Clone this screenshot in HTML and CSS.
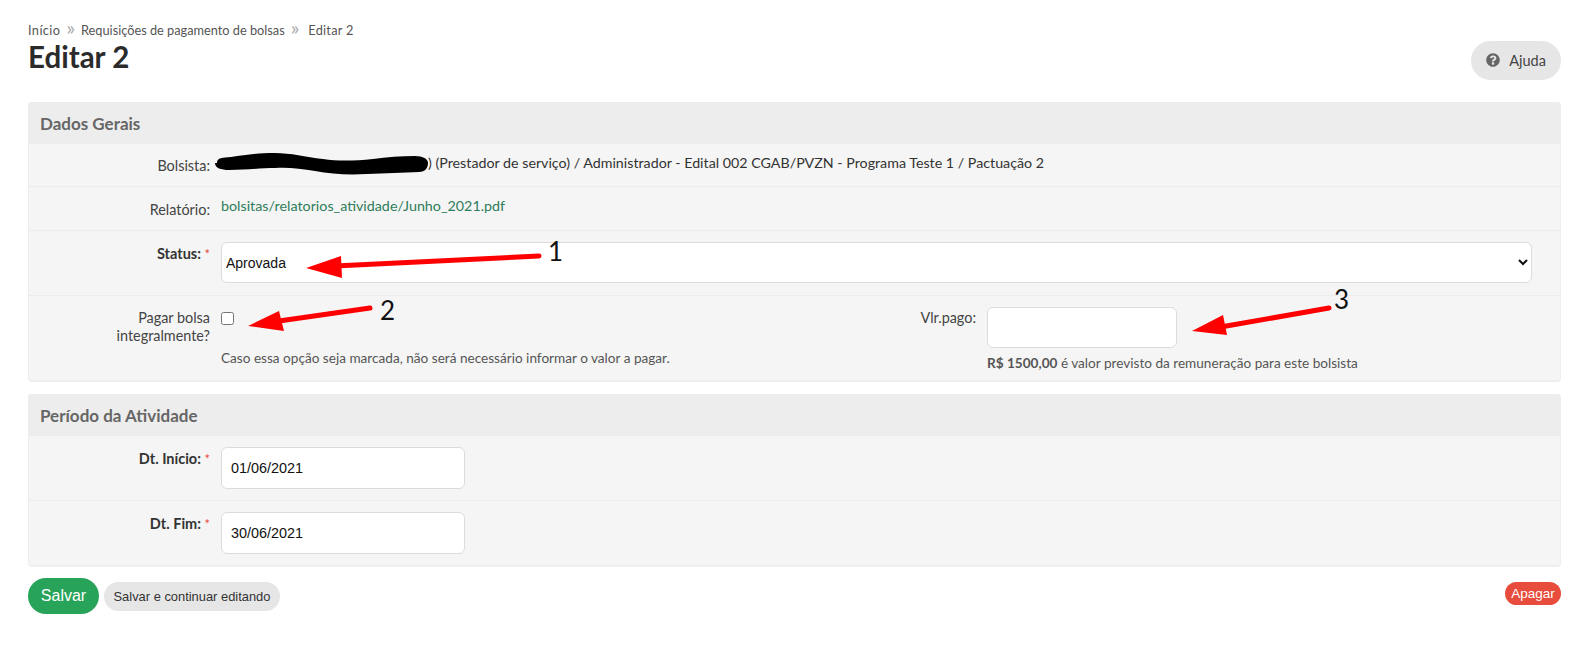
FILE: index.html
```html
<!DOCTYPE html>
<html lang="pt-BR">
<head>
<meta charset="utf-8">
<title>Editar 2</title>
<link rel="stylesheet" href="styles.css">
</head>
<body>
<main class="page">
  <div class="top">
    <div>
      <nav class="crumbs"><a>Início</a><span class="sep">»</span><a>Requisições de pagamento de bolsas</a><span class="sep">»</span><span>Editar 2</span></nav>
      <h1>Editar 2</h1>
    </div>
    <a class="help">
      <svg class="help-icon" viewBox="0 0 512 512"><path fill="#666" d="M504 256c0 137-111 248-248 248S8 393 8 256 119 8 256 8s248 111 248 248zM262.700 90c-54.500 0-89.300 23-116.500 63.800-3.500 5.300-2.300 12.400 2.700 16.300l34.700 26.300c5.200 3.900 12.600 3 16.700-2.100 17.900-22.700 30.100-35.800 57.300-35.800 20.400 0 45.700 13.100 45.700 33 0 15-12.400 22.700-32.600 34-23.600 13.200-54.800 29.700-54.800 70.900V296c0 6.600 5.400 12 12 12h56c6.600 0 12-5.400 12-12v-1.300c0-28.600 83.400-29.800 83.400-107.100 0-58.200-60.400-102.600-116.600-97.600zM256 338c-25.400 0-46 20.600-46 46s20.600 46 46 46 46-20.600 46-46-20.600-46-46-46z"/></svg>
      <span>Ajuda</span>
    </a>
  </div>

  <form>
    <section class="panel">
      <h2>Dados Gerais</h2>
      <div class="row row-bolsista">
        <span class="label">Bolsista:</span>
        <span class="value"><span class="redacted"></span>) (Prestador de serviço) / Administrador - Edital 002 CGAB/PVZN - Programa Teste 1 / Pactuação 2</span>
      </div>
      <div class="row row-relatorio">
        <span class="label">Relatório:</span>
        <a class="value link">bolsitas/relatorios_atividade/Junho_2021.pdf</a>
      </div>
      <div class="row row-status">
        <label class="label strong">Status: <i>*</i></label>
        <select class="control select"><option>Aprovada</option></select>
      </div>
      <div class="row-split">
        <div class="field field-left">
          <label class="label label-wrap">Pagar bolsa<br>integralmente?</label>
          <div>
            <input class="check" type="checkbox">
            <p class="hint hint-left">Caso essa opção seja marcada, não será necessário informar o valor a pagar.</p>
          </div>
        </div>
        <div class="field field-right">
          <label class="label label-vlr">Vlr.pago:</label>
          <div>
            <input class="control vlr" type="text">
            <p class="hint"><b>R$ 1500,00</b> é valor previsto da remuneração para este bolsista</p>
          </div>
        </div>
      </div>
    </section>

    <section class="panel panel-2">
      <h2>Período da Atividade</h2>
      <div class="row row-date">
        <label class="label strong">Dt. Início: <i>*</i></label>
        <input class="control date" type="text" value="01/06/2021">
      </div>
      <div class="row row-date">
        <label class="label strong">Dt. Fim: <i>*</i></label>
        <input class="control date" type="text" value="30/06/2021">
      </div>
    </section>

    <div class="actions">
      <button class="btn save" type="button">Salvar</button>
      <button class="btn continue" type="button">Salvar e continuar editando</button>
      <a class="btn delete">Apagar</a>
    </div>
  </form>
</main>

<svg class="overlay" viewBox="0 0 1578 659" aria-hidden="true">
  <path class="scribble" d="M217 163c0-6 6-5 14-6 14-2 26-4 44-4 16 0 30 4 48 6 14 2 30 2 50 0 14-2 28-3 42-3 8 0 13 3 13 7 0 5-3 9-9 9-16 1-34 1-52 2-20 1-36 0-52-3-14-2-26-4-40-3-14 0-30 2-46 2-8 0-14-2-14-7z"/>
  <g class="arrow">
    <path d="M539 256 335 266"/><path class="head" d="M306 268 341 256 342 278Z"/>
    <path d="M370 308 272 322"/><path class="head" d="M248 326 279 311 284 331Z"/>
    <path d="M1329 308 1215 328"/><path class="head" d="M1192 331 1223 315 1227 335Z"/>
  </g>
</svg>
<span class="num num-1">1</span>
<span class="num num-2">2</span>
<span class="num num-3">3</span>
</body>
</html>
```

FILE: styles.css
```css
* { box-sizing: border-box; }
html, body { margin: 0; background: #fff; }
body { font-family: Lato, "Liberation Sans", sans-serif; font-size: 14px; color: #333; height: 659px; overflow: hidden; position: relative; }
.page { padding: 21px 17px 0 28px; }

.top { display: flex; justify-content: space-between; align-items: flex-start; height: 81px; }
.crumbs { font-size: 12.75px; line-height: 18px; color: #555; }
.crumbs a:first-child { letter-spacing: 0.4px; }
.crumbs span:last-child { letter-spacing: 0.25px; margin-left: 3px; }
.sep { color: #aaa; margin: 0 6px; font-size: 20px; line-height: 0; }
h1 { margin: 0; font-size: 29.500px; line-height: 36px; font-weight: 700; color: #2b2b2b; }
.help { margin-top: 20px; width: 90px; height: 39px; padding-bottom: 1px; border-radius: 20px; background: #e6e6e6; display: flex; align-items: center; justify-content: center; gap: 9px; font-size: 14.500px; color: #444; }
.help-icon { width: 14px; height: 14px; }

.panel { background: #f5f5f5; border-radius: 4px; border-bottom: 2px solid #eee; box-shadow: inset 1px 0 #eee, inset -1px 0 #eee; }
.panel-2 { margin-top: 12px; }
h2 { margin: 0; background: #ededed; height: 42px; padding: 0 12px; font-size: 17px; line-height: 44px; font-weight: 700; color: #666; border-radius: 4px 4px 0 0; }

.row { display: grid; grid-template-columns: 182px 1fr; column-gap: 11px; border-bottom: 1px solid #ececec; align-items: start; }
.panel .row-date:last-child { border-bottom: 0; height: 64px; }
.label { text-align: right; font-size: 14.400px; line-height: 18px; color: #444; }
.strong { font-weight: 700; font-size: 14.500px; color: #333; padding-top: 3px; }
.label i { color: #e74c3c; font-style: normal; font-weight: 400; font-size: 13px; }
.value { font-size: 14.250px; line-height: 18px; color: #333; }
.redacted { display: inline-block; width: 207px; }
.link { font-size: 14.300px; color: #2e7d5b; }

.row-bolsista { height: 43px; padding-top: 10px; }
.row-bolsista .label { padding-top: 3px; }
.row-relatorio { height: 44px; padding-top: 10px; }
.row-relatorio .label { padding-top: 4px; }
.row-status { height: 65px; padding-top: 11px; }

.control { display: block; background: #fff; border: 1px solid #dcdcdc; border-radius: 6px; font-family: "Liberation Sans", sans-serif; font-size: 14.400px; color: #111; }
.select { width: 1311px; height: 41px; padding: 1px 0 0 0; font-size: 14px; }
.row-date { height: 65px; padding-top: 11px; }
.date { width: 244px; height: 42px; padding: 0 9px; }

.row-split { display: flex; height: 84px; padding-top: 11px; }
.field { display: flex; }
.field-left { width: 781px; gap: 11px; }
.field-left > .label { width: 182px; flex: none; }
.label-wrap { padding-top: 2px; }
.field-right { gap: 11px; }
.label-vlr { width: 167px; flex: none; padding-top: 2px; }
.check { display: block; margin: 5px 0 0 0; width: 13px; height: 13px; }
.hint { margin: 0; font-size: 13.600px; line-height: 18px; color: #555; }
.hint-left { margin-top: 24px; }
.vlr { width: 190px; height: 41px; padding: 0 8px; }
.field-right .hint { margin-top: 6px; }
.hint b { font-weight: 700; }

.actions { display: flex; align-items: center; margin-top: 11px; gap: 5px; height: 36px; }
.btn { border: 0; display: block; font-family: "Liberation Sans", sans-serif; }
.save { width: 71px; height: 36px; border-radius: 18px; background: #27a35a; color: #fff; font-size: 16px; padding: 0; }
.continue { width: 176px; height: 29px; border-radius: 15px; background: #e6e6e6; color: #333; font-size: 12.900px; padding: 0; }
.delete { margin: 0 0 5px auto; width: 56px; height: 23px; line-height: 24px; border-radius: 12px; background: #e74c3c; color: #fff; font-size: 13.500px; text-align: center; }

.overlay { position: absolute; left: 0; top: 0; width: 1578px; height: 659px; pointer-events: none; }
.scribble { fill: #000; }
.arrow path { fill: none; stroke: #f00; stroke-width: 5; stroke-linecap: round; }
.arrow .head { fill: #f00; stroke: none; }
.num { position: absolute; font-family: Lato, sans-serif; font-size: 26px; line-height: 30px; color: #111; }
.num-1 { left: 548px; top: 236px; }
.num-2 { left: 380px; top: 295px; }
.num-3 { left: 1334px; top: 284px; }
```
